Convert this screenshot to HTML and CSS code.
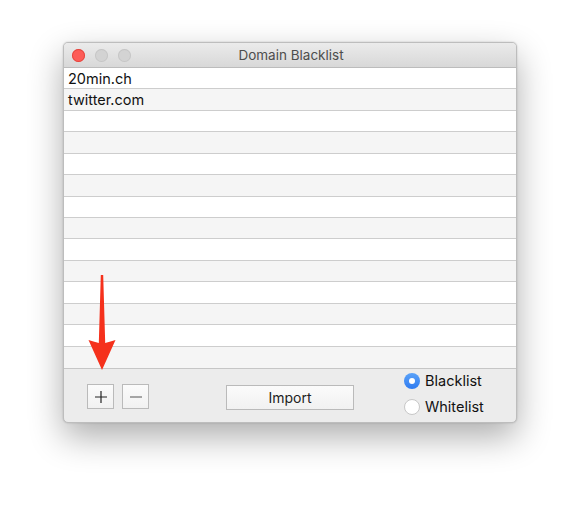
FILE: index.html
```html
<!DOCTYPE html>
<html lang="en">
<head>
  <meta charset="UTF-8">
  <meta name="viewport" content="width=device-width, initial-scale=1.0">
  <title>Domain Blacklist</title>
  <link rel="stylesheet" href="styles.css">
</head>
<body>
  <div class="window">
    <div class="titlebar">
      <div class="lights">
        <span class="light light-close"></span>
        <span class="light"></span>
        <span class="light"></span>
      </div>
      <div class="title">Domain Blacklist</div>
    </div>

    <ul class="list">
      <li>20min.ch</li>
      <li>twitter.com</li>
      <li></li>
      <li></li>
      <li></li>
      <li></li>
      <li></li>
      <li></li>
      <li></li>
      <li></li>
      <li></li>
      <li></li>
      <li></li>
      <li></li>
    </ul>

    <div class="footer">
      <button class="btn btn-square">
        <svg width="14" height="14" viewBox="0 0 14 14"><path d="M7 1v12M1 7h12" stroke="#222" stroke-width="1.2"/></svg>
      </button>
      <button class="btn btn-square">
        <svg width="14" height="14" viewBox="0 0 14 14"><path d="M1 7h12" stroke="#555" stroke-width="1.2"/></svg>
      </button>
      <button class="btn btn-import">Import</button>
      <div class="radios">
        <label class="radio"><span class="dot dot-on"></span>Blacklist</label>
        <label class="radio"><span class="dot"></span>Whitelist</label>
      </div>
    </div>

    <!-- red arrow pointing at the + button -->
    <svg class="arrow" width="30" height="96" viewBox="0 0 30 96">
      <path d="M13.8 0 L16.2 0 L18.2 68 Q22 67 28.5 65 L15 95 L1.5 65 Q8 67 11.8 68 Z" fill="#f5311c"/>
    </svg>
  </div>
</body>
</html>
```

FILE: styles.css
```css
html, body{
  height: 100%;
}
body{
  margin: 0;
  box-sizing: border-box;
  padding: 42px 0 0 63px;
  background: #fff;
  font-family: Inter, "Liberation Sans", sans-serif;
}

.window{
  position: relative;
  width: 454px;
  height: 381px;
  box-sizing: border-box;
  border: 1px solid #bdbdbd;
  border-radius: 5px;
  background: #ececec;
  box-shadow: 0 14px 34px rgba(0,0,0,0.32), 0 0 2px rgba(0,0,0,0.2);
  overflow: hidden;
  display: flex;
  flex-direction: column;
}

.titlebar{
  position: relative;
  height: 24px;
  flex: none;
  background: linear-gradient(#ebebeb, #d8d8d8);
  border-bottom: 1px solid #bcbcbc;
  display: flex;
  align-items: center;
  justify-content: center;
}
.lights{
  position: absolute;
  left: 8px;
  top: 6px;
  display: flex;
  gap: 10px;
}
.light{
  width: 13px;
  height: 13px;
  border-radius: 50%;
  background: #d3d3d3;
  box-shadow: inset 0 0 0 1px #c6c6c6;
}
.light-close{
  background: #fd5c57;
  box-shadow: inset 0 0 0 1px #e3463f;
}
.title{
  font-size: 13.5px;
  color: #4d4d4d;
  margin-left: 2px;
}

.list{
  list-style: none;
  margin: 0;
  padding: 0;
  height: 300px;
  flex: none;
  background: #fff;
  display: grid;
  grid-template-rows: repeat(14, 1fr);
}
.list > li{
  box-sizing: border-box;
  border-bottom: 1px solid #cdcdcd;
  padding: 2px 0 0 4px;
  font-size: 14.5px;
  line-height: 18px;
  color: #111;
}
.list > li:nth-child(even){
  background: #f5f5f5;
}
.list > li:last-child{
  border-bottom: none;
}

.footer{
  flex: 1;
  border-top: 1px solid #c6c6c6;
  display: flex;
  align-items: flex-start;
  padding: 15px 0 0 23px;
}
.btn{
  font-family: inherit;
  box-sizing: border-box;
  border: 1px solid #bababa;
  background: linear-gradient(#fbfbfb, #f1f1f1);
  padding: 0;
  display: flex;
  align-items: center;
  justify-content: center;
}
.btn-square{
  width: 27px;
  height: 25px;
  margin-right: 8px;
}
.btn-import{
  width: 128px;
  height: 25px;
  margin: 1px 0 0 69px;
  font-size: 14px;
  color: #222;
}

.radios{
  margin: -12px 0 0 50px;
  display: flex;
  flex-direction: column;
  gap: 9px;
}
.radio{
  display: flex;
  align-items: center;
  font-size: 14.5px;
  color: #111;
  height: 17px;
}
.dot{
  width: 16px;
  height: 16px;
  box-sizing: border-box;
  border-radius: 50%;
  background: #fff;
  border: 1px solid #c7c7c7;
  margin-right: 5px;
  display: flex;
  align-items: center;
  justify-content: center;
}
.dot-on{
  border: none;
  background: linear-gradient(#5aa2f8, #2f7bf0);
}
.dot-on::before{
  content: '';
  width: 6px;
  height: 6px;
  border-radius: 50%;
  background: #fff;
}

.arrow{
  position: absolute;
  left: 23px;
  top: 232px;
}
```
